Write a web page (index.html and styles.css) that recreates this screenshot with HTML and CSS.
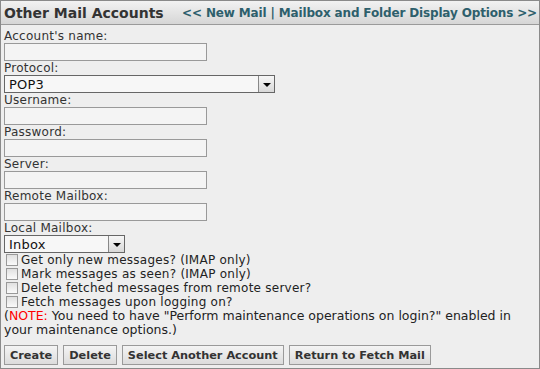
FILE: index.html
```html
<!DOCTYPE html>
<html lang="en">
<head>
    <meta charset="UTF-8">
    <title>Other Mail Accounts</title>
    <link rel="stylesheet" href="styles.css">
</head>
<body>
    <div class="panel">
        <div class="title-bar">
            <h1>Other Mail Accounts</h1>
            <div class="nav-links">
                <a href="#">&lt;&lt; New Mail</a> | <a href="#">Mailbox and Folder Display Options &gt;&gt;</a>
            </div>
        </div>
        <form class="account-form">
            <label class="field-label" for="acct-name">Account's name:</label>
            <input class="text-input" type="text" id="acct-name">

            <label class="field-label" for="protocol">Protocol:</label>
            <div class="select-box wide">
                <select id="protocol"><option>POP3</option><option>IMAP</option></select>
                <span class="select-arrow"></span>
            </div>

            <label class="field-label" for="username">Username:</label>
            <input class="text-input" type="text" id="username">

            <label class="field-label" for="password">Password:</label>
            <input class="text-input" type="password" id="password">

            <label class="field-label" for="server">Server:</label>
            <input class="text-input" type="text" id="server">

            <label class="field-label" for="remote">Remote Mailbox:</label>
            <input class="text-input" type="text" id="remote">

            <label class="field-label" for="local">Local Mailbox:</label>
            <div class="select-box narrow">
                <select id="local"><option>Inbox</option></select>
                <span class="select-arrow"></span>
            </div>

            <label class="check-row"><input type="checkbox"> Get only new messages? (IMAP only)</label>
            <label class="check-row"><input type="checkbox"> Mark messages as seen? (IMAP only)</label>
            <label class="check-row"><input type="checkbox"> Delete fetched messages from remote server?</label>
            <label class="check-row"><input type="checkbox"> Fetch messages upon logging on?</label>

            <p class="note"><span class="note-tag">(<em>NOTE:</em></span> You need to have "Perform maintenance operations on login?" enabled in your maintenance options.)</p>

            <div class="button-row">
                <button type="button">Create</button>
                <button type="button">Delete</button>
                <button type="button">Select Another Account</button>
                <button type="button">Return to Fetch Mail</button>
            </div>
        </form>
    </div>
</body>
</html>
```

FILE: styles.css
```css
body {
    margin: 0;
    padding: 0;
    font-family: Verdana, "DejaVu Sans", sans-serif;
    font-size: 12px;
    letter-spacing: 0.25px;
    color: #222;
    background: #eee;
}
.panel {
    width: 540px;
    height: 369px;
    box-sizing: border-box;
    border: 1px solid #8a8a8a;
    background: #eeeeee;
}
.title-bar {
    display: flex;
    justify-content: space-between;
    align-items: center;
    height: 23px;
    padding: 0 2px 0 3px;
    background: linear-gradient(#f2f2f2, #d6d6d6);
    border-bottom: 1px solid #9a9a9a;
    letter-spacing: 0;
}
.title-bar h1 {
    margin: 0;
    font-size: 14px;
    color: #333;
}
.nav-links {
    font-size: 12px;
    font-weight: bold;
    letter-spacing: -0.15px;
    color: #2e5f6c;
}
.nav-links a {
    color: #2e5f6c;
    text-decoration: none;
}
.account-form {
    padding: 4px 3px 0 3px;
}
.field-label {
    display: block;
    line-height: 14px;
    color: #333;
}
.text-input {
    display: block;
    width: 203px;
    height: 18px;
    box-sizing: border-box;
    margin: 0;
    border: 1px solid #999;
    background: #f4f4f4;
    font: inherit;
}
.select-box {
    display: flex;
    height: 18px;
    box-sizing: border-box;
    border: 1px solid #666;
    background: #f7f7f7;
}
.select-box.wide { width: 271px; }
.select-box.narrow { width: 121px; }
.select-box select {
    flex: 1;
    appearance: none;
    -webkit-appearance: none;
    border: none;
    background: transparent;
    font-family: inherit;
    font-size: 13px;
    letter-spacing: 0.2px;
    padding: 0 4px;
    color: #111;
    outline: none;
}
.select-arrow {
    width: 15px;
    border-left: 1px solid #888;
    background: linear-gradient(#f6f6f6, #d8d8d8);
    display: flex;
    align-items: center;
    justify-content: center;
}
.select-arrow::after {
    content: "";
    border-left: 4px solid transparent;
    border-right: 4px solid transparent;
    border-top: 4px solid #000;
    margin-top: 2px;
}
.check-row {
    display: flex;
    align-items: center;
    gap: 3px;
    line-height: 14px;
    color: #222;
}
.check-row input {
    appearance: none;
    -webkit-appearance: none;
    width: 12px;
    height: 12px;
    margin: 0 0 0 2px;
    border: 1px solid #999;
    background: linear-gradient(#e0e0e0, #fafafa);
}
.note {
    margin: 0;
    line-height: 14px;
    font-size: 12.5px;
    letter-spacing: 0;
    color: #222;
}
.note-tag {
    color: #222;
}
.note-tag em {
    font-style: normal;
    color: #f00;
}
.button-row {
    display: flex;
    gap: 5px;
    margin-top: 8px;
}
.button-row button {
    height: 20px;
    padding: 0 5px;
    font-family: inherit;
    font-size: 11.3px;
    letter-spacing: 0;
    font-weight: bold;
    color: #333;
    border: 1px solid #9a9a9a;
    background: linear-gradient(#f4f4f4, #dcdcdc);
}
```
